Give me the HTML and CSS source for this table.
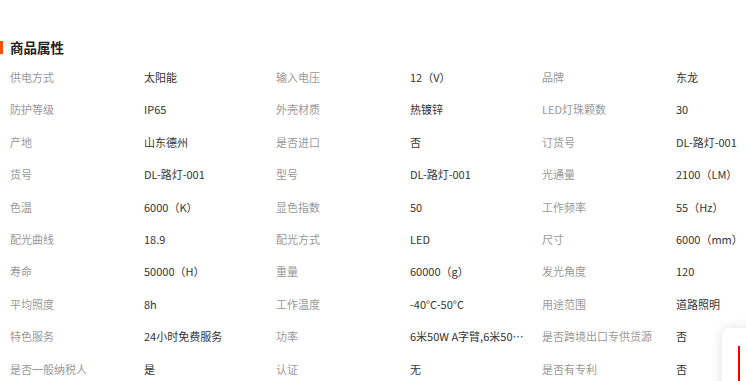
FILE: index.html
```html
<!DOCTYPE html>
<html lang="zh-CN">
<head>
<meta charset="utf-8">
<title>商品属性</title>
<link rel="stylesheet" href="styles.css">
</head>
<body>
<section class="attrs">
  <h2 class="title">商品属性</h2>
  <div class="grid">
    <span class="k">供电方式</span><span class="v">太阳能</span>
    <span class="k">输入电压</span><span class="v">12（V）</span>
    <span class="k">品牌</span><span class="v">东龙</span>

    <span class="k">防护等级</span><span class="v">IP65</span>
    <span class="k">外壳材质</span><span class="v">热镀锌</span>
    <span class="k">LED灯珠颗数</span><span class="v">30</span>

    <span class="k">产地</span><span class="v">山东德州</span>
    <span class="k">是否进口</span><span class="v">否</span>
    <span class="k">订货号</span><span class="v">DL-路灯-001</span>

    <span class="k">货号</span><span class="v">DL-路灯-001</span>
    <span class="k">型号</span><span class="v">DL-路灯-001</span>
    <span class="k">光通量</span><span class="v">2100（LM）</span>

    <span class="k">色温</span><span class="v">6000（K）</span>
    <span class="k">显色指数</span><span class="v">50</span>
    <span class="k">工作频率</span><span class="v">55（Hz）</span>

    <span class="k">配光曲线</span><span class="v">18.9</span>
    <span class="k">配光方式</span><span class="v">LED</span>
    <span class="k">尺寸</span><span class="v">6000（mm）</span>

    <span class="k">寿命</span><span class="v">50000（H）</span>
    <span class="k">重量</span><span class="v">60000（g）</span>
    <span class="k">发光角度</span><span class="v">120</span>

    <span class="k">平均照度</span><span class="v">8h</span>
    <span class="k">工作温度</span><span class="v">-40°C-50°C</span>
    <span class="k">用途范围</span><span class="v">道路照明</span>

    <span class="k">特色服务</span><span class="v">24小时免费服务</span>
    <span class="k">功率</span><span class="v">6米50W A字臂,6米50W 单臂</span>
    <span class="k">是否跨境出口专供货源</span><span class="v">否</span>

    <span class="k">是否一般纳税人</span><span class="v">是</span>
    <span class="k">认证</span><span class="v">无</span>
    <span class="k">是否有专利</span><span class="v">否</span>
  </div>
</section>
<div class="float-card"><span class="float-line"></span></div>
</body>
</html>
```

FILE: styles.css
```css
html, body {
  margin: 0;
  padding: 0;
  background: #fff;
  overflow: hidden;
}
body {
  font-family: "Noto Sans CJK SC", "Noto Sans", sans-serif;
  color: #333;
  width: 746px;
  height: 381px;
  position: relative;
}
.attrs {
  padding-top: 36px;
}
.title {
  margin: 0;
  font-size: 13.5px;
  font-weight: bold;
  line-height: 22px;
  color: #222;
  padding-left: 10px;
  height: 22px;
  position: relative;
}
.title::before {
  content: "";
  position: absolute;
  left: 0;
  top: 5px;
  width: 3px;
  height: 13px;
  background: #ff5000;
}
.grid {
  display: grid;
  grid-template-columns: 134px 132px 134px 132px 134px 80px;
  grid-auto-rows: 32.42px;
  padding-left: 10px;
  margin-top: 2px;
  font-size: 11px;
  line-height: 32px;
  padding-top: 1px;
}
.k {
  color: #999;
  white-space: nowrap;
}
.v {
  color: #333;
  white-space: nowrap;
  overflow: hidden;
  text-overflow: ellipsis;
  padding-right: 12px;
}
.v:nth-child(6n) {
  padding-right: 0;
  overflow: visible;
}
.float-card {
  position: absolute;
  left: 722px;
  top: 328px;
  width: 60px;
  height: 80px;
  background: #fff;
  border-radius: 8px;
  box-shadow: 0 0 12px rgba(0,0,0,0.12);
}
.float-line {
  position: absolute;
  left: 16px;
  top: 18px;
  width: 2px;
  height: 60px;
  background: #f00;
}
```
